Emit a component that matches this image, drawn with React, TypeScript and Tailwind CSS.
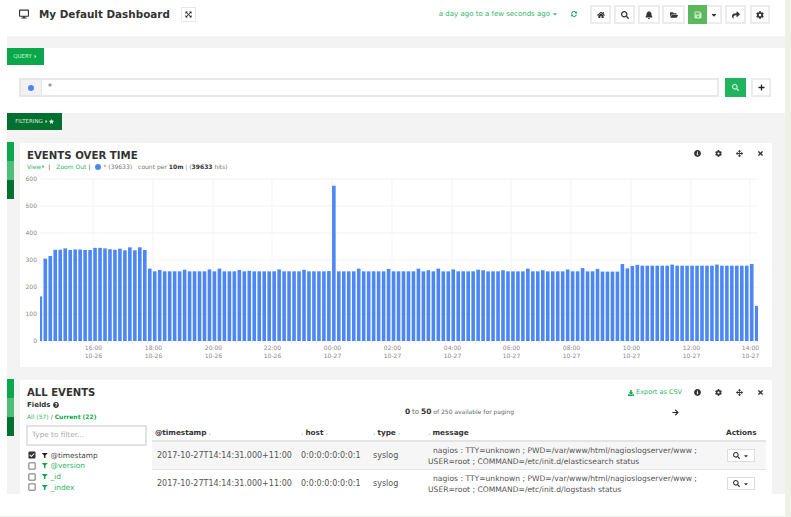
import type { ReactNode } from 'react'
import {
  FaDesktop, FaExpandArrowsAlt, FaHome, FaSearch, FaBell, FaFolderOpen, FaSave, FaShare, FaCog,
  FaCaretDown, FaCaretRight, FaSyncAlt, FaInfoCircle, FaTimes, FaArrowsAlt, FaFilter, FaDownload,
  FaArrowRight, FaPlus, FaCheckSquare, FaRegSquare, FaStar, FaQuestionCircle,
} from 'react-icons/fa'

const overrides: Record<number, number> = {
  '-1': 165, 0: 305, 1: 315, 2: 338, 3: 338, 4: 343, 5: 337, 6: 339, 7: 339, 8: 337, 9: 337, 10: 345, 11: 345,
  12: 343, 13: 340, 14: 338, 15: 342, 16: 336, 17: 347, 18: 336, 19: 347, 20: 337,
  21: 268, 23: 263, 28: 264, 33: 265, 35: 268, 39: 263, 41: 260, 47: 265, 52: 264, 57: 259, 58: 575,
  63: 268, 69: 267, 75: 268, 77: 262, 79: 268, 82: 265, 87: 264, 88: 262, 92: 262, 97: 268, 100: 262,
  105: 265, 108: 270, 111: 267, 112: 257, 113: 257, 114: 257, 115: 257, 116: 285, 117: 269, 118: 278, 119: 282,
}
const bars = Array.from({ length: 145 }, (_, k) => {
  const i = k - 1
  let v = i > 119 ? 279 + ((i * 7) % 9 === 0 ? 4 : 0) : 258
  if (overrides[i] !== undefined) v = overrides[i]
  if (i === 142) v = 285
  if (i === 143) v = 130
  return { x: 45.3 + 4.975 * i - 1.8, v }
})
const ticks: [number, string, string][] = [
  [93, '16:00', '10-26'], [153, '18:00', '10-26'], [213, '20:00', '10-26'], [272, '22:00', '10-26'],
  [332, '00:00', '10-27'], [392, '02:00', '10-27'], [452, '04:00', '10-27'], [511, '06:00', '10-27'],
  [571, '08:00', '10-27'], [631, '10:00', '10-27'], [691, '12:00', '10-27'], [750, '14:00', '10-27'],
]

function Chart() {
  return (
    <svg viewBox="20 175 752 190" width={752} height={190} className="mt-[4px] block">
      {[0, 100, 200, 300, 400, 500, 600].map((t) => {
        const y = 341 - t * 0.27
        return (
          <g key={t}>
            <line x1={40} x2={758} y1={y} y2={y} stroke="#f3f3f3" strokeWidth={1} />
            <text x={37} y={y + 2} textAnchor="end" fontSize={6} fill="#888">{t}</text>
          </g>
        )
      })}
      {ticks.map(([x, a, b]) => (
        <g key={a}>
          <line x1={x} x2={x} y1={179} y2={341} stroke="#f3f3f3" strokeWidth={1} />
          <text x={x + 0.5} y={350} textAnchor="middle" fontSize={6} fill="#888">{a}</text>
          <text x={x + 0.5} y={358} textAnchor="middle" fontSize={6} fill="#888">{b}</text>
        </g>
      ))}
      {bars.map((b, i) => {
        const left = Math.max(b.x, 40)
        const right = Math.min(b.x + 3.6, 758)
        return (
          <rect key={i} x={left} y={341 - b.v * 0.27} width={right - left} height={b.v * 0.27} fill="#4c87f5" />
        )
      })}
    </svg>
  )
}

function TopBtn({ children, className = 'w-[21px]' }: { children: ReactNode; className?: string }) {
  return (
    <div className={`flex h-[19px] items-center justify-center border-2 border-[#ececec] bg-white text-[8px] text-[#333] ${className}`}>
      {children}
    </div>
  )
}

function PanelIcons() {
  return (
    <>
      <FaInfoCircle className="text-[7px] text-[#333]" />
      <FaCog className="ml-[14px] text-[7px] text-[#333]" />
      <FaArrowsAlt className="ml-[14px] text-[7px] text-[#333]" />
      <FaTimes className="ml-[14px] text-[7px] text-[#333]" />
    </>
  )
}

function Strip() {
  return (
    <div className="flex w-[7px] flex-none flex-col">
      <div className="h-[19px] bg-[#0aa84a]" />
      <div className="h-[19px] bg-[#4fbf78]" />
      <div className="h-[19px] bg-[#04702f]" />
    </div>
  )
}

function Field({ name, on }: { name: string; on?: boolean }) {
  return (
    <div className="flex h-[10.7px] items-center pl-[2px] text-[7.4px]">
      {on ? <FaCheckSquare className="text-[8px] text-[#333]" /> : <FaRegSquare className="text-[8px] text-[#444]" />}
      <FaFilter className={`ml-[6px] text-[5.5px] ${on ? 'text-[#222]' : 'text-[#0aa84a]'}`} />
      <span className={`ml-[3px] ${on ? 'text-[#444]' : 'text-[#2eb565]'}`}>{name}</span>
    </div>
  )
}

function Row({ stripe, path }: { stripe?: boolean; path: string }) {
  return (
    <div className={`flex h-[28px] items-center border-b border-[#e4e4e4] text-[8px] text-[#555] ${stripe ? 'bg-[#f6f6f6]' : 'bg-white'}`}>
      <div className="w-[149px] flex-none pl-[5px]">2017-10-27T14:14:31.000+11:00</div>
      <div className="w-[72px] flex-none">0:0:0:0:0:0:0:1</div>
      <div className="w-[55px] flex-none">syslog</div>
      <div className="w-[299px] flex-none text-[7.6px] leading-[11px]">
        <div className="pl-[5px]">nagios : TTY=unknown ; PWD=/var/www/html/nagioslogserver/www ;</div>
        <div>USER=root ; COMMAND=/etc/init.d/{path} status</div>
      </div>
      <div className="flex h-[13px] w-[28px] flex-none items-center justify-between border border-[#ddd] bg-white px-[5px] text-[#333]">
        <FaSearch className="text-[7px]" />
        <FaCaretDown className="text-[6px]" />
      </div>
    </div>
  )
}

function Head({ name, left, right = true }: { name: string; left?: boolean; right?: boolean }) {
  return (
    <span className="flex items-center font-bold text-[#333]">
      {left && <span className="mr-[2px] text-[6px] font-normal text-[#4fbf78]">‹</span>}
      {name}
      {right && <span className="ml-[2px] text-[6px] font-normal text-[#4fbf78]">›</span>}
    </span>
  )
}

export default function App() {
  return (
    <div className="h-[517px] w-[791px] overflow-hidden bg-[#eef2e6] pr-[6px] pb-px font-['DejaVu_Sans',sans-serif]">
      <div className="h-[516px] w-[785px] bg-white pl-[7px]">
        {/* top bar */}
        <header className="flex h-[36px] items-start pr-[15px]">
          <FaDesktop className="mt-[9px] ml-[12px] text-[10px] text-[#333]" />
          <h1 className="mt-[7px] ml-[10px] text-[10.4px] leading-[15px] font-bold text-[#333]">My Default Dashboard</h1>
          <div className="mt-[7px] ml-[11px] flex h-[15px] w-[15px] items-center justify-center border border-[#e8e8e8]">
            <FaExpandArrowsAlt className="text-[7px] text-[#222]" />
          </div>
          <div className="mt-[9px] ml-auto flex items-center text-[7px] leading-[10px] whitespace-nowrap text-[#2eb565]">
            a day ago to a few seconds ago
            <FaCaretDown className="ml-[2px] text-[6px]" />
          </div>
          <FaSyncAlt className="mt-[11px] ml-[13px] text-[6px] text-[#0aa84a]" />
          <div className="mt-[5px] ml-[13px] flex">
            <TopBtn><FaHome /></TopBtn>
            <TopBtn className="ml-[3px] w-[21px]"><FaSearch /></TopBtn>
            <TopBtn className="ml-[3px] w-[22px]"><FaBell /></TopBtn>
            <TopBtn className="ml-[2px] w-[23px]"><FaFolderOpen /></TopBtn>
            <div className="ml-[3px] flex h-[19px] w-[19px] items-center justify-center bg-[#5cb85c] text-[8px] text-[#cfeccf]"><FaSave /></div>
            <TopBtn className="w-[15px] border-l-0"><FaCaretDown /></TopBtn>
            <TopBtn className="ml-[3px] w-[21px]"><FaShare /></TopBtn>
            <TopBtn className="ml-[4px] w-[20px]"><FaCog /></TopBtn>
          </div>
        </header>

        <div className="h-[12px] bg-[#f3f3f3]" />

        {/* query */}
        <section className="h-[65px]">
          <div className="flex h-[17px] w-[37px] items-center justify-center bg-[#0aa84a] text-[5.5px] text-[#cfeedd]">
            QUERY
            <FaCaretRight className="ml-px text-[5px]" />
          </div>
          <div className="mt-[13px] ml-[12px] flex h-[19px]">
            <div className="flex w-[23px] items-center justify-center border-2 border-r border-[#e6e6e6] bg-[#f1f1f1]">
              <div className="h-[6px] w-[6px] rounded-full bg-[#4c87f5]" />
            </div>
            <div className="flex w-[677px] items-center border-2 border-l-0 border-[#e8e8e8] pl-[6px] text-[8px] text-[#555]">*</div>
            <div className="ml-[6px] flex w-[21px] items-center justify-center bg-[#22b35e] text-[7px] text-[#d6f3e2]"><FaSearch /></div>
            <div className="ml-[5px] flex w-[20px] items-center justify-center border-2 border-[#ececec] text-[7px] text-[#222]"><FaPlus /></div>
          </div>
        </section>

        {/* filtering + panels */}
        <section className="h-[381px] overflow-hidden bg-[#f3f3f3]">
          <div className="flex h-[17px] w-[55px] items-center justify-center bg-[#04702f] text-[5.5px] text-[#cfeedd]">
            FILTERING
            <FaCaretRight className="ml-px text-[5px]" />
            <FaStar className="text-[5px]" />
          </div>

          <div className="mt-[12px] flex">
            <Strip />
            <div className="mt-px ml-[6px] h-[224px] w-[752px] overflow-hidden bg-white">
              <div className="flex items-start pt-[6px] pr-[8px] pl-[7px]">
                <h2 className="text-[10.2px] leading-[13px] font-bold text-[#333]">EVENTS OVER TIME</h2>
                <div className="ml-auto flex items-center pt-[1px]"><PanelIcons /></div>
              </div>
              <div className="flex h-[9px] items-center pl-[7px] text-[6px] whitespace-nowrap text-[#777]">
                <span className="flex items-center text-[#2eb565]">View<FaCaretRight className="text-[5px]" /></span>
                <span className="ml-[2px] text-[#444]">|</span>
                <span className="ml-[6px] text-[#2eb565]">Zoom Out</span>
                <span className="ml-[2px] text-[#444]">|</span>
                <span className="ml-[5px] h-[6px] w-[6px] rounded-full bg-[#4c87f5]" />
                <span className="ml-[2px]">* (39633)</span>
                <span className="ml-[6px]">count per <b className="text-[#333]">10m</b> | (<b className="text-[#333]">39633</b> hits)</span>
              </div>
              <Chart />
            </div>
          </div>

          <div className="mt-[12px] flex">
            <Strip />
            <div className="mt-px ml-[6px] h-[114px] w-[752px] overflow-hidden bg-white">
              <div className="flex items-start pt-[6px] pr-[8px] pl-[7px]">
                <h2 className="text-[10.1px] leading-[13px] font-bold text-[#333]">ALL EVENTS</h2>
                <div className="ml-auto flex items-center pt-[2px]">
                  <FaDownload className="mr-[2px] text-[6px] text-[#0aa84a]" />
                  <span className="mr-[12px] text-[6.5px] text-[#2eb565]">Export as CSV</span>
                  <PanelIcons />
                </div>
              </div>
              <div className="flex">
                <aside className="ml-[6px] w-[121px] flex-none">
                  <div className="mt-px flex h-[10px] items-center pl-[1px] text-[7px] font-bold text-[#333]">
                    Fields
                    <FaQuestionCircle className="ml-[2px] text-[6px] text-[#333]" />
                  </div>
                  <div className="flex h-[12px] items-center pl-[1px] text-[6px] text-[#2eb565]">
                    All (57)
                    <span className="mx-[2px] text-[#555]">/</span>
                    <b className="text-[#0aa84a]">Current (22)</b>
                  </div>
                  <div className="mt-[3px] flex h-[21px] items-center border-2 border-[#e2e2e2] pl-[4px] text-[7.3px] text-[#aaa]">Type to filter...</div>
                  <div className="mt-[4px]">
                    <Field name="@timestamp" on />
                    <Field name="@version" />
                    <Field name="_id" />
                    <Field name="_index" />
                  </div>
                </aside>
                <div className="ml-[5px] w-[614px] flex-none">
                  <div className="relative h-[27px] text-center text-[6px] text-[#666]">
                    <div className="pt-[7px] pl-[1px]">
                      <b className="text-[7.5px] text-[#333]">0</b> <span className="text-[7px]">to</span> <b className="text-[7.5px] text-[#333]">50</b> of 250 available for paging
                    </div>
                    <FaArrowRight className="absolute top-[10px] left-[520px] text-[7px] text-[#222]" />
                  </div>
                  <div className="flex h-[16px] items-center border-b-2 border-[#e4e4e4] text-[7.3px]">
                    <div className="w-[146px] flex-none pl-[3px]"><Head name="@timestamp" /></div>
                    <div className="w-[75px] flex-none pl-[3px]"><Head name="host" left /></div>
                    <div className="w-[55px] flex-none"><Head name="type" left /></div>
                    <div className="w-[298px] flex-none"><Head name="message" left right={false} /></div>
                    <Head name="Actions" right={false} />
                  </div>
                  <Row stripe path="elasticsearch" />
                  <Row path="logstash" />
                </div>
              </div>
            </div>
          </div>
        </section>
      </div>
    </div>
  )
}
